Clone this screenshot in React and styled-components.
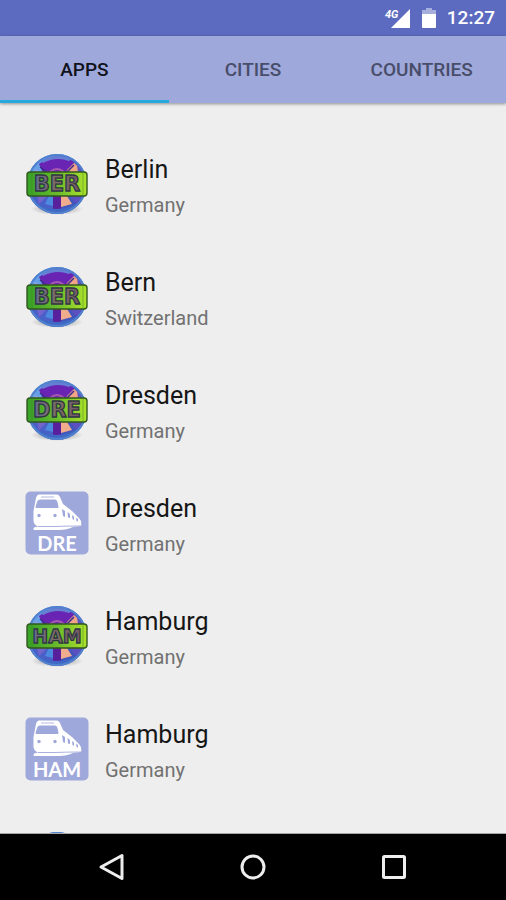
import React, { useId, useState } from 'react';

import styled, { createGlobalStyle } from 'styled-components';


const GlobalStyle = createGlobalStyle`

    * {
        box-sizing: border-box;
    }

    body {
        margin: 0;
        background: #eeeeee;
        font-family: Roboto, "Liberation Sans", sans-serif;
    }
`;

const Screen = styled.div`

    height: 100vh;
    display: flex;
    flex-direction: column;
    background: #eeeeee;
`;

const StatusBar = styled.header`

    flex: none;
    height: 36px;
    padding: 0 11px;
    display: flex;
    align-items: center;
    justify-content: flex-end;
    gap: 11px;
    background: #5c6bc0;
    color: #ffffff;
`;

const Clock = styled.time`
    font-size: 19px;
    font-weight: 500;
    line-height: 36px;
`;

const TabBar = styled.nav`

    flex: none;
    display: flex;
    background: #9fa8da;
    box-shadow: 0 1px 3px rgba(0, 0, 0, 0.4);
    z-index: 1;
`;

const Tab = styled.button`

    flex: 1 1 0;
    height: 67px;
    padding: 3px 0 0;
    border: 0;
    border-bottom: 3px solid ${(props) => (props.$active ? '#26a9dc' : 'transparent')};
    background: none;
    color: ${(props) => (props.$active ? '#11131c' : '#484d6a')};
    font-family: inherit;
    font-size: 19px;
    font-weight: 500;
    cursor: pointer;
`;

const CityList = styled.ul`

    flex: 1 1 0;
    margin: 0;
    padding: 24px 0 0;
    overflow-y: auto;
    list-style: none;
    scrollbar-width: none;
`;

const CityRow = styled.li`

    height: 113px;
    padding: 0 25px;
    display: flex;
    align-items: center;
    gap: 16px;
`;

const IconArt = styled.svg`
    flex: none;
    width: 64px;
    height: 64px;
    overflow: visible;
`;

const CityText = styled.div`
    padding-top: 5px;
    display: flex;
    flex-direction: column;
    gap: 5px;
`;

const CityName = styled.span`
    color: #161616;
    font-size: 25px;
    line-height: 32px;
`;

const CountryName = styled.span`
    color: #717171;
    font-size: 20px;
    line-height: 28px;
`;

const NavBar = styled.footer`

    flex: none;
    height: 67px;
    padding: 0 42px;
    display: flex;
    align-items: center;
    justify-content: space-between;
    border-top: 1px solid #a6a6a6;
    background: #000000;
`;

const NavButton = styled.button`

    width: 140px;
    height: 60px;
    padding: 0;
    border: 0;
    display: flex;
    align-items: center;
    justify-content: center;
    background: none;
    color: #eeeeee;
    cursor: pointer;
`;

const apps = [
    { city: 'Berlin', country: 'Germany', code: 'BER', kind: 'map' },
    { city: 'Bern', country: 'Switzerland', code: 'BER', kind: 'map' },
    { city: 'Dresden', country: 'Germany', code: 'DRE', kind: 'map' },
    { city: 'Dresden', country: 'Germany', code: 'DRE', kind: 'train' },
    { city: 'Hamburg', country: 'Germany', code: 'HAM', kind: 'map' },
    { city: 'Hamburg', country: 'Germany', code: 'HAM', kind: 'train' },
    { city: '', country: '', code: '', kind: 'map' },
];

const tabs = ['APPS', 'CITIES', 'COUNTRIES'];


// globe with a number plate across it
function MapIcon({ code }) {

    const id = useId();

    return (
        <IconArt viewBox="0 0 64 64" aria-hidden="true">
            <defs>
                <linearGradient id={`${id}sky`} x1="0" y1="0" x2="1" y2="1">
                    <stop offset="0" stopColor="#72b0ee" />
                    <stop offset="0.5" stopColor="#4b55c0" />
                    <stop offset="1" stopColor="#3a55b8" />
                </linearGradient>
                <linearGradient id={`${id}plate`} x1="0" y1="0" x2="1" y2="0">
                    <stop offset="0" stopColor="#35a028" />
                    <stop offset="0.5" stopColor="#6abb2c" />
                    <stop offset="1" stopColor="#aee22c" />
                </linearGradient>
                <linearGradient id={`${id}ink`} x1="0" y1="0" x2="1" y2="0">
                    <stop offset="0" stopColor="#656a90" />
                    <stop offset="0.5" stopColor="#7c6c62" />
                    <stop offset="1" stopColor="#745a6a" />
                </linearGradient>
                <radialGradient id={`${id}shadow`}>
                    <stop offset="0.5" stopColor="#000" stopOpacity="0.2" />
                    <stop offset="1" stopColor="#000" stopOpacity="0" />
                </radialGradient>
                <clipPath id={`${id}globe`}>
                    <circle cx="32" cy="32" r="29" />
                </clipPath>
            </defs>
            <ellipse cx="32" cy="57" rx="26" ry="6" fill={`url(#${id}shadow)`} />
            <circle cx="32" cy="32" r="30" fill={`url(#${id}sky)`} />
            <g clipPath={`url(#${id}globe)`}>
                <path d="M2 32 10 10 22 4 18 20 12 32Z" fill="#66a1e8" />
                <path d="M14 12Q31 -2 49 10L44 23H19Z" fill="#6a24b4" />
                <path d="M16 9Q31 0 47 7L44 9Q31 4 18 11Z" fill="#657fd2" />
                <path d="M10 17 22 23H8Z" fill="#8b9de5" />
                <path d="M42 18 49 11 59 20 57 25H40Z" fill="#f2a486" />
                <path d="M52 12 60 20 59 25 53 21Z" fill="#5a58c0" />
                <path d="M15 15 24 22M49 13 40 22" stroke="#3a2c8c" strokeWidth="1.5" />
                <path d="M25 20Q32 14 39 20" fill="none" stroke="#a658b0" strokeWidth="2" />
                <path d="M5 42H28V62H15Z" fill="#4a60c8" />
                <path d="M12 43 23 43 14 52Z" fill="#7464cc" />
                <path d="M24 44 28 45V54L20 52Z" fill="#4c8ae0" />
                <path d="M36 44H42L47 52 36 55Z" fill="#f0ac8c" />
                <path d="M44 43H59L52 53Z" fill="#5c50c0" />
                <path d="M28 43H36V60H28Z" fill="#58209d" />
                <path d="M8 49Q31 65 56 49L60 57 32 63 5 57Z" fill="#3f68c4" />
            </g>
            <circle cx="32" cy="32" r="29" fill="none" stroke="#4f81ce" strokeWidth="2" />
            <rect x="2" y="20" width="60" height="24" rx="3" fill={`url(#${id}plate)`} stroke="#32581d" strokeWidth="1.4" />
            <path d="M7 20.5v23M58 20.5v23" stroke="#3f861e" strokeWidth="0.8" opacity="0.6" />
            {code && (
                <text
                    x="32"
                    y="39"
                    textAnchor="middle"
                    fontFamily="DejaVu Sans, sans-serif"
                    fontWeight="700"
                    fontSize={code === 'HAM' ? 19 : 21}
                    fill={`url(#${id}ink)`}
                    stroke="#303744"
                    strokeWidth="1.3"
                >
                    {code}
                </text>
            )}
        </IconArt>
    );
}

function TrainIcon({ code }) {
    return (
        <IconArt viewBox="0 0 64 64" aria-hidden="true">
            <rect x="0.5" y="0.5" width="63" height="63" rx="5" fill="#9fa8da" />
            <path
                d="M14 3.5H32Q34 3.5 35 6L38 13 47 20 54 27Q57 30 56 35L48 36Q42 39 34 39H9Q8 38 9 36.5L13 35.5Q9 34 8.5 30V20L11 7Q12 3.5 14 3.5Z"
                fill="#fff"
            />
            <path d="M15 8.5H30Q32 8.5 32.5 11L33.5 16Q33.5 17 32.5 17H11.5Q10.5 17 10.5 16L12 11Q12.5 8.5 15 8.5Z" fill="#9fa8da" />
            <path d="M16 6H29" stroke="#9fa8da" strokeWidth="0.8" />
            <path d="M37 18 40 20V26L38 25ZM42.5 21 45 23V27L43 26.5ZM47 24 49 25.5V29L47.5 28ZM51 26.5 53 28V30.5L51.5 30Z" fill="#9fa8da" />
            <circle cx="14" cy="24.5" r="1.7" fill="#9fa8da" />
            <circle cx="30" cy="24.5" r="1.7" fill="#9fa8da" />
            <path d="M13 35.5H30Q40 35 56 35" fill="none" stroke="#9fa8da" strokeWidth="0.9" />
            <text
                x="32"
                y="60"
                textAnchor="middle"
                fontFamily="Lato, Open Sans, sans-serif"
                fontWeight="700"
                fontSize="20"
                fill="#fff"
            >
                {code}
            </text>
        </IconArt>
    );
}

function SignalIcon() {
    return (
        <svg width="27" height="22" viewBox="0 0 27 22" role="img" aria-label="4G signal">
            <path d="M26 2V21H7Z" fill="#fff" />
            <text
                x="1"
                y="11"
                fontFamily="Roboto, sans-serif"
                fontWeight="700"
                fontStyle="italic"
                fontSize="11"
                fill="#fff"
                stroke="#5c6bc0"
                strokeWidth="2"
                paintOrder="stroke"
            >
                4G
            </text>
        </svg>
    );
}

function BatteryIcon() {
    return (
        <svg width="14" height="22" viewBox="0 0 14 22" role="img" aria-label="Battery">
            <path d="M4 1H10V3H14V8H0V3H4Z" fill="#a6aedb" />
            <path d="M0 7H14V20Q14 21 13 21H1Q0 21 0 20Z" fill="#fff" />
        </svg>
    );
}

function App() {

    const [active, setActive] = useState('APPS');

    return (
        <Screen>
            <GlobalStyle />
            <StatusBar>
                <SignalIcon />
                <BatteryIcon />
                <Clock>12:27</Clock>
            </StatusBar>

            <TabBar>
                {tabs.map((tab) => (
                    <Tab key={tab} $active={tab === active} onClick={() => setActive(tab)}>{tab}</Tab>
                ))}
            </TabBar>

            <CityList>
                {apps.map((app, index) => (
                    <CityRow key={index}>
                        {app.kind === 'map' ? <MapIcon code={app.code} /> : <TrainIcon code={app.code} />}
                        <CityText>
                            <CityName>{app.city}</CityName>
                            <CountryName>{app.country}</CountryName>
                        </CityText>
                    </CityRow>
                ))}
            </CityList>

            <NavBar>
                <NavButton aria-label="Back">
                    <svg width="28" height="28" viewBox="0 0 28 28" fill="none" stroke="currentColor" strokeWidth="3" strokeLinejoin="round">
                        <path d="M24 2.5V25.5L3 14Z" />
                    </svg>
                </NavButton>
                <NavButton aria-label="Home">
                    <svg width="28" height="28" viewBox="0 0 28 28" fill="none" stroke="currentColor" strokeWidth="3">
                        <circle cx="14" cy="14" r="11" />
                    </svg>
                </NavButton>
                <NavButton aria-label="Recent apps">
                    <svg width="28" height="28" viewBox="0 0 28 28" fill="none" stroke="currentColor" strokeWidth="3" strokeLinejoin="round">
                        <rect x="3.5" y="3.5" width="21" height="21" rx="1" />
                    </svg>
                </NavButton>
            </NavBar>
        </Screen>
    );
}

export default App;
